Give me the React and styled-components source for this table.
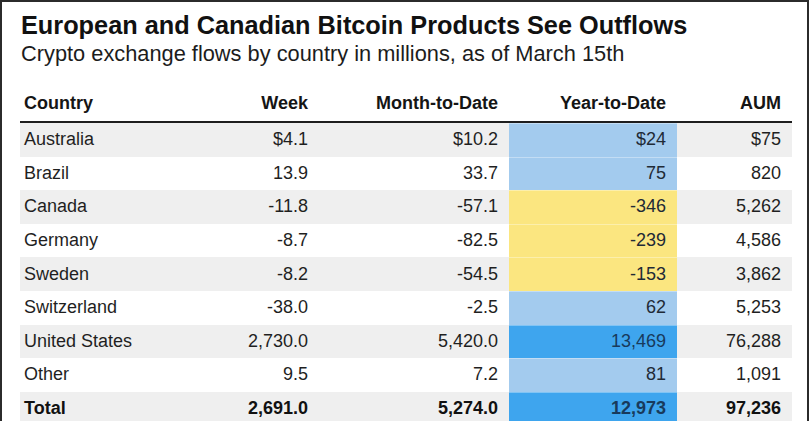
import React from 'react';
import styled, { createGlobalStyle } from 'styled-components';

const GlobalStyle = createGlobalStyle`
  html, body {
    margin: 0;
    padding: 0;
    background: #ffffff;
    overflow: hidden;
  }
  body {
    font-family: "Liberation Sans", Arial, Helvetica, sans-serif;
    color: #1c1c1c;
  }
`;

const Frame = styled.div`
  width: 809px;
  height: 421px;
  box-sizing: border-box;
  border-top: 2px solid #2b2b2b;
  border-left: 2px solid #2b2b2b;
  border-right: 2px solid #2b2b2b;
  background: #fff;
  overflow: hidden;
`;

const Header = styled.header`
  padding: 8px 0 0 19px;
  display: flex;
  flex-direction: column;
  gap: 1px;
`;

const Title = styled.h1`
  margin: 0;
  font-size: 25.3px;
  line-height: 30px;
  font-weight: 700;
  color: #111;
`;

const Subtitle = styled.p`
  margin: 0;
  font-size: 21.8px;
  line-height: 26px;
  color: #1c1c1c;
`;

const Table = styled.table`
  margin: 19px 0 0 18px;
  width: 772px;
  table-layout: fixed;
  border-collapse: collapse;
  font-size: 18px;
`;

const HeadCell = styled.th`
  height: 35px;
  padding: 0 11px 0 4px;
  text-align: ${({ $align }) => $align || 'right'};
  font-weight: 700;
  color: #151515;
  border-bottom: 2px solid #1e1e1e;
  vertical-align: middle;
  white-space: nowrap;
`;

const Row = styled.tr`
  background: ${({ $shaded }) => ($shaded ? '#efefef' : '#ffffff')};
  font-weight: ${({ $bold }) => ($bold ? 700 : 400)};
`;

const Cell = styled.td`
  height: 33.6px;
  padding: 0 11px 0 4px;
  text-align: ${({ $align }) => $align || 'right'};
  white-space: nowrap;
  color: ${({ $bold }) => ($bold ? '#111' : '#1f1f1f')};
`;

const ytdColors = {
  light: '#a3cbee',
  yellow: '#fbe680',
  dark: '#3ea5ee',
};

const YtdCell = styled(Cell)`
  background: ${({ $tone }) => ytdColors[$tone]};
  color: ${({ $tone }) => ($tone === 'dark' ? '#183a5c' : '#1f2a36')};
  box-shadow: inset 0 1px 0 rgba(255, 255, 255, 0.35);
`;

const rows = [
  { country: 'Australia', week: '$4.1', month: '$10.2', ytd: '$24', tone: 'light', aum: '$75' },
  { country: 'Brazil', week: '13.9', month: '33.7', ytd: '75', tone: 'light', aum: '820' },
  { country: 'Canada', week: '-11.8', month: '-57.1', ytd: '-346', tone: 'yellow', aum: '5,262' },
  { country: 'Germany', week: '-8.7', month: '-82.5', ytd: '-239', tone: 'yellow', aum: '4,586' },
  { country: 'Sweden', week: '-8.2', month: '-54.5', ytd: '-153', tone: 'yellow', aum: '3,862' },
  { country: 'Switzerland', week: '-38.0', month: '-2.5', ytd: '62', tone: 'light', aum: '5,253' },
  { country: 'United States', week: '2,730.0', month: '5,420.0', ytd: '13,469', tone: 'dark', aum: '76,288' },
  { country: 'Other', week: '9.5', month: '7.2', ytd: '81', tone: 'light', aum: '1,091' },
  { country: 'Total', week: '2,691.0', month: '5,274.0', ytd: '12,973', tone: 'dark', aum: '97,236', total: true },
];

export default function App() {
  return (
    <>
      <GlobalStyle />
      <Frame>
        <Header>
          <Title>European and Canadian Bitcoin Products See Outflows</Title>
          <Subtitle>Crypto exchange flows by country in millions, as of March 15th</Subtitle>
        </Header>
        <Table>
          <colgroup>
            <col style={{ width: 180 }} />
            <col style={{ width: 119 }} />
            <col style={{ width: 190 }} />
            <col style={{ width: 168 }} />
            <col style={{ width: 115 }} />
          </colgroup>
          <thead>
            <tr>
              <HeadCell $align="left">Country</HeadCell>
              <HeadCell>Week</HeadCell>
              <HeadCell>Month-to-Date</HeadCell>
              <HeadCell>Year-to-Date</HeadCell>
              <HeadCell>AUM</HeadCell>
            </tr>
          </thead>
          <tbody>
            {rows.map((r, i) => (
              <Row key={r.country} $shaded={i % 2 === 0} $bold={r.total}>
                <Cell $align="left" $bold={r.total}>{r.country}</Cell>
                <Cell $bold={r.total}>{r.week}</Cell>
                <Cell $bold={r.total}>{r.month}</Cell>
                <YtdCell $tone={r.tone}>{r.ytd}</YtdCell>
                <Cell $bold={r.total}>{r.aum}</Cell>
              </Row>
            ))}
          </tbody>
        </Table>
      </Frame>
    </>
  );
}
